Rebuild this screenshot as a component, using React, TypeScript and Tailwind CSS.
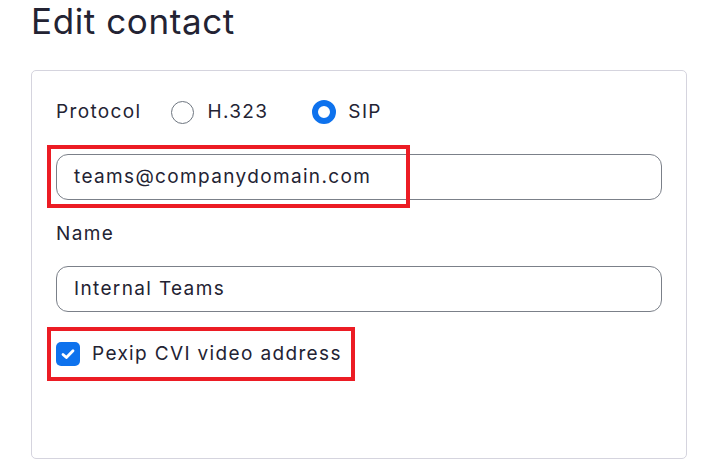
import React from "react";

const EditContact = () => {
  return (
    <div className="relative h-[467px] w-[720px] overflow-hidden bg-white pl-[31px] font-['Inter',sans-serif] text-[#232333]">
      <h1 className="pt-[1px] text-[35px] leading-[40px] font-normal tracking-[0.6px]">Edit contact</h1>

      <div className="mt-[29px] h-[389px] w-[656px] rounded-[5px] border border-[#d5d4de] px-[24px] pt-[29px] text-[19px] tracking-[1.35px]">
        <div className="flex h-[24px] items-center">
          <span className="mr-[30px]">Protocol</span>
          <label className="flex items-center">
            <span className="h-[23px] w-[23px] rounded-full border border-[#6e7680] bg-white" />
            <span className="ml-[13px]">H.323</span>
          </label>
          <label className="ml-[44px] flex items-center">
            <span className="h-[24px] w-[24px] rounded-full border-[6px] border-[#0e72ed] bg-white" />
            <span className="ml-[12px]">SIP</span>
          </label>
        </div>

        <div className="mt-[30px] flex h-[46px] items-center rounded-[12px] border border-[#7b8089] px-[17px]">
          teams@companydomain.com
        </div>

        <div className="mt-[22px] leading-[24px]">Name</div>

        <div className="mt-[20px] flex h-[46px] items-center rounded-[12px] border border-[#7b8089] px-[17px]">
          Internal Teams
        </div>

        <label className="mt-[30px] flex h-[24px] items-center">
          <span className="flex h-[24px] w-[24px] items-center justify-center rounded-[5px] bg-[#0e72ed]">
            <svg width="24" height="24" viewBox="0 0 24 24" fill="none">
              <path d="M7 12.4 10.4 15.6 17 8.8" stroke="white" strokeWidth="2.8" strokeLinecap="round" strokeLinejoin="round" />
            </svg>
          </span>
          <span className="ml-[12px]">Pexip CVI video address</span>
        </label>
      </div>

      {/* annotation boxes */}
      <div className="absolute left-[47px] top-[145px] h-[63px] w-[363px] border-[4px] border-[#ec1c24]" />
      <div className="absolute left-[47px] top-[327px] h-[54px] w-[308px] border-[4px] border-[#ec1c24]" />
    </div>
  );
};

export default function App() {
  return <EditContact />;
}
